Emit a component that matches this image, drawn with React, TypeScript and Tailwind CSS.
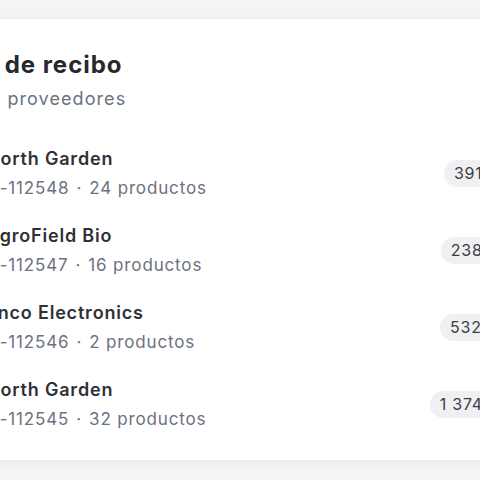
import React from 'react';

type Receipt = {
  supplier: string;
  code: string;
  items: number;
  amount: string;
};

const receipts: Receipt[] = [
  { supplier: 'North Garden', code: 'N-112548', items: 24, amount: '391,50 €' },
  { supplier: 'AgroField Bio', code: 'N-112547', items: 16, amount: '238,90 €' },
  { supplier: 'Enco Electronics', code: 'N-112546', items: 2, amount: '532,40 €' },
  { supplier: 'North Garden', code: 'N-112545', items: 32, amount: '1 374,00 €' },
];

const App: React.FC = () => {
  return (
    <div
      className="w-[480px] h-[480px] overflow-hidden bg-[#f4f4f5] pt-[19px]"
      style={{ fontFamily: 'Inter, "Noto Sans", sans-serif' }}
    >
      <div className="-ml-[100px] w-[664px] bg-white shadow-[0_1px_8px_rgba(0,0,0,0.06)] rounded-2xl pl-[28px] pr-[28px] pt-[30px] pb-[29px]">
        <div className="-ml-[4px]">
          <h2 className="text-[24px] leading-8 font-bold tracking-[0.04em] text-[#25282c]">Notas de recibo</h2>
          <p className="mt-1 -ml-[15px] text-[18px] leading-7 tracking-[0.06em] text-[#6b7280]">Envíos de proveedores</p>
        </div>

        <ul className="mt-[33px] flex flex-col gap-[23px]">
          {receipts.map((r) => (
            <li key={r.code} className="flex items-center gap-[18px]">
              <div className="w-10 h-10 rounded-full bg-[#eef0f2] shrink-0"></div>
              <div className="flex-1 min-w-0">
                <div className="text-[18px] leading-[26px] font-semibold tracking-[0.045em] text-[#2e3136]">
                  {r.supplier}
                </div>
                <div className="mt-[4px] text-[17px] leading-6 tracking-[0.05em] text-[#6b7280]">
                  {r.code}
                  <span className="mx-[7px]">·</span>
                  {r.items} productos
                </div>
              </div>
              <span className="rounded-full bg-[#eef0f2] px-[10px] py-[3px] text-[16px] leading-[21px] tracking-[0.05em] text-[#3b3e44] whitespace-nowrap">
                {r.amount}
              </span>
            </li>
          ))}
        </ul>
      </div>
    </div>
  );
};

export default App;
